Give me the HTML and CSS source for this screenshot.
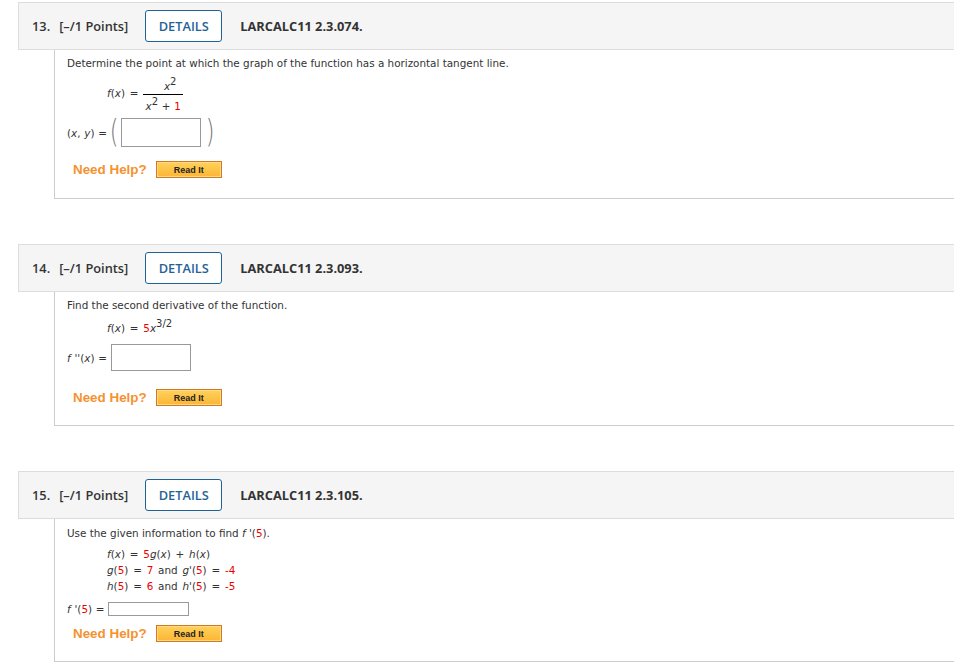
FILE: index.html
```html
<!DOCTYPE html>
<html lang="en">

<head>
  <meta charset="UTF-8">
  <title>Assignment</title>
  <link rel="stylesheet" href="styles.css">
</head>

<body>
  <div class="questions">

    <!-- 13 -->
    <div class="question">
      <div class="q-head">
        <span class="q-num">13.</span>
        <span class="q-pts">[&ndash;/1 Points]</span>
        <button class="details">DETAILS</button>
        <span class="q-code">LARCALC11 2.3.074.</span>
      </div>
      <div class="q-body q-body--13">
        <p class="prompt">Determine the point at which the graph of the function has a horizontal tangent line.</p>
        <div class="math math--frac">
          <span><i>f</i>(<i>x</i>) = </span>
          <span class="frac">
            <span class="frac__top"><i>x</i><sup>2</sup></span>
            <span class="frac__bot"><i>x</i><sup>2</sup> + <span class="red">1</span></span>
          </span>
        </div>
        <div class="answer answer--pair">
          <span>(<i>x</i>, <i>y</i>) =</span>
          <span class="paren paren--open">(</span>
          <span class="input input--pair"></span>
          <span class="paren paren--close">)</span>
        </div>
        <div class="help">
          <span class="help__label">Need Help?</span>
          <span class="read-it">Read It</span>
        </div>
      </div>
    </div>

    <!-- 14 -->
    <div class="question">
      <div class="q-head">
        <span class="q-num">14.</span>
        <span class="q-pts">[&ndash;/1 Points]</span>
        <button class="details">DETAILS</button>
        <span class="q-code">LARCALC11 2.3.093.</span>
      </div>
      <div class="q-body q-body--14">
        <p class="prompt">Find the second derivative of the function.</p>
        <div class="math math--single"><i>f</i>(<i>x</i>) = <span class="red">5</span><i>x</i><sup>3/2</sup></div>
        <div class="answer answer--single">
          <span><i>f</i> ''(<i>x</i>) =</span>
          <span class="input input--single"></span>
        </div>
        <div class="help help--14">
          <span class="help__label">Need Help?</span>
          <span class="read-it">Read It</span>
        </div>
      </div>
    </div>

    <!-- 15 -->
    <div class="question">
      <div class="q-head">
        <span class="q-num">15.</span>
        <span class="q-pts">[&ndash;/1 Points]</span>
        <button class="details">DETAILS</button>
        <span class="q-code">LARCALC11 2.3.105.</span>
      </div>
      <div class="q-body q-body--15">
        <p class="prompt">Use the given information to find <i>f</i> '(<span class="red">5</span>).</p>
        <div class="math math-lines">
          <div><i>f</i>(<i>x</i>) = <span class="red">5</span><i>g</i>(<i>x</i>) + <i>h</i>(<i>x</i>)</div>
          <div><i>g</i>(<span class="red">5</span>) = <span class="red">7</span> and <i>g</i>'(<span class="red">5</span>) = <span class="red">-4</span></div>
          <div><i>h</i>(<span class="red">5</span>) = <span class="red">6</span> and <i>h</i>'(<span class="red">5</span>) = <span class="red">-5</span></div>
        </div>
        <div class="answer answer--small">
          <span><i>f</i> '(<span class="red">5</span>) =</span>
          <span class="input input--small"></span>
        </div>
        <div class="help help--15">
          <span class="help__label">Need Help?</span>
          <span class="read-it">Read It</span>
        </div>
      </div>
    </div>

  </div>
</body>

</html>
```

FILE: styles.css
```css
* {
  margin: 0;
  padding: 0;
  box-sizing: border-box;
}

body {
  background: #fff;
  overflow: hidden;
  padding-top: 2px;
}

/* ============= 题目容器 ============= */
.questions {
  margin-left: 18px;
  width: 960px;
}

.question {
  margin-bottom: 45px;
}

.question:last-child {
  margin-bottom: 0;
}

.q-head {
  display: flex;
  align-items: center;
  height: 48px;
  padding-left: 13px;
  background: #f5f5f5;
  border: 1px solid #ddd;
  font-family: "Open Sans", "Liberation Sans", sans-serif;
  font-size: 12.8px;
  font-weight: 600;
  color: #333;
}

.q-pts {
  margin-left: 9px;
}

.details {
  margin-left: 17px;
  width: 77px;
  height: 32px;
  border: 1px solid #1f6396;
  border-radius: 3px;
  background: #fff;
  color: #1f6396;
  font-family: "Open Sans", "Liberation Sans", sans-serif;
  font-size: 12.8px;
  font-weight: 600;
}

.q-code {
  margin-left: 18px;
  font-weight: 700;
}

/* ============= 题目内容 ============= */
.q-body {
  margin-left: 36px;
  padding-left: 12px;
  border-left: 1px solid #ccc;
  border-bottom: 1px solid #ccc;
  font-family: "DejaVu Sans", Verdana, sans-serif;
  font-size: 10.4px;
  color: #333;
}

.q-body--13 {
  height: 149px;
  padding-top: 6px;
}

.q-body--14 {
  height: 134px;
  padding-top: 6px;
}

.q-body--15 {
  height: 143px;
  padding-top: 7px;
}

.prompt {
  line-height: 14px;
}

.red {
  color: #e00;
}

sup {
  font-size: 10px;
  line-height: 0;
  vertical-align: 5px;
}

.math {
  margin-left: 40px;
  line-height: 14px;
  word-spacing: 1.5px;
}

.math--single {
  margin-top: 9px;
}

.math--frac {
  display: flex;
  align-items: center;
  margin-top: 4px;
}

.frac {
  display: inline-flex;
  flex-direction: column;
  align-items: center;
  margin-left: 5px;
  word-spacing: 0.5px;
}

.frac__top {
  line-height: 12px;
  padding: 6px 0 2px 14px;
}

.frac__bot {
  line-height: 12px;
  border-top: 1px solid #000;
  padding: 5px 2px 0 2px;
}

.math-lines {
  margin-top: 6px;
  line-height: 16px;
}

.answer {
  display: flex;
  align-items: center;
  word-spacing: 0.5px;
}

.answer--pair {
  margin-top: 6px;
}

.answer--single {
  margin-top: 9px;
}

.paren {
  font-family: "DejaVu Sans", sans-serif;
  font-size: 32px;
  font-weight: 200;
  color: #777;
  line-height: 32px;
}

.paren--open {
  margin: -4px 0 0 1px;
  transform: scaleX(0.7);
}

.paren--close {
  margin: -4px 0 0 3px;
  transform: scaleX(0.7);
}

.input {
  display: inline-block;
  border: 1px solid #999;
  background: #fff;
}

.input--pair {
  width: 80px;
  height: 29px;
}

.input--single {
  width: 80px;
  height: 27px;
  margin-left: 4px;
}

.answer--small {
  margin-top: 8px;
}

.input--small {
  width: 81px;
  height: 14px;
  margin-left: 3px;
}

/* ============= 帮助 ============= */
.help {
  display: flex;
  align-items: center;
  margin: 14px 0 0 6px;
}

.help--14 {
  margin-top: 18px;
}

.help--15 {
  margin-top: 9px;
}

.help__label {
  font-family: "Liberation Sans", Arial, sans-serif;
  font-size: 13.4px;
  font-weight: 700;
  color: #f5922f;
}

.read-it {
  margin-left: 9px;
  width: 66px;
  height: 17px;
  display: flex;
  justify-content: center;
  align-items: center;
  border: 1px solid #d27a22;
  box-shadow: inset 0 0 0 1px #ffd98a;
  background: linear-gradient(to bottom, #ffd25a, #fbb535);
  font-family: "Liberation Sans", Arial, sans-serif;
  font-size: 9px;
  font-weight: 700;
  color: #222;
}
```
